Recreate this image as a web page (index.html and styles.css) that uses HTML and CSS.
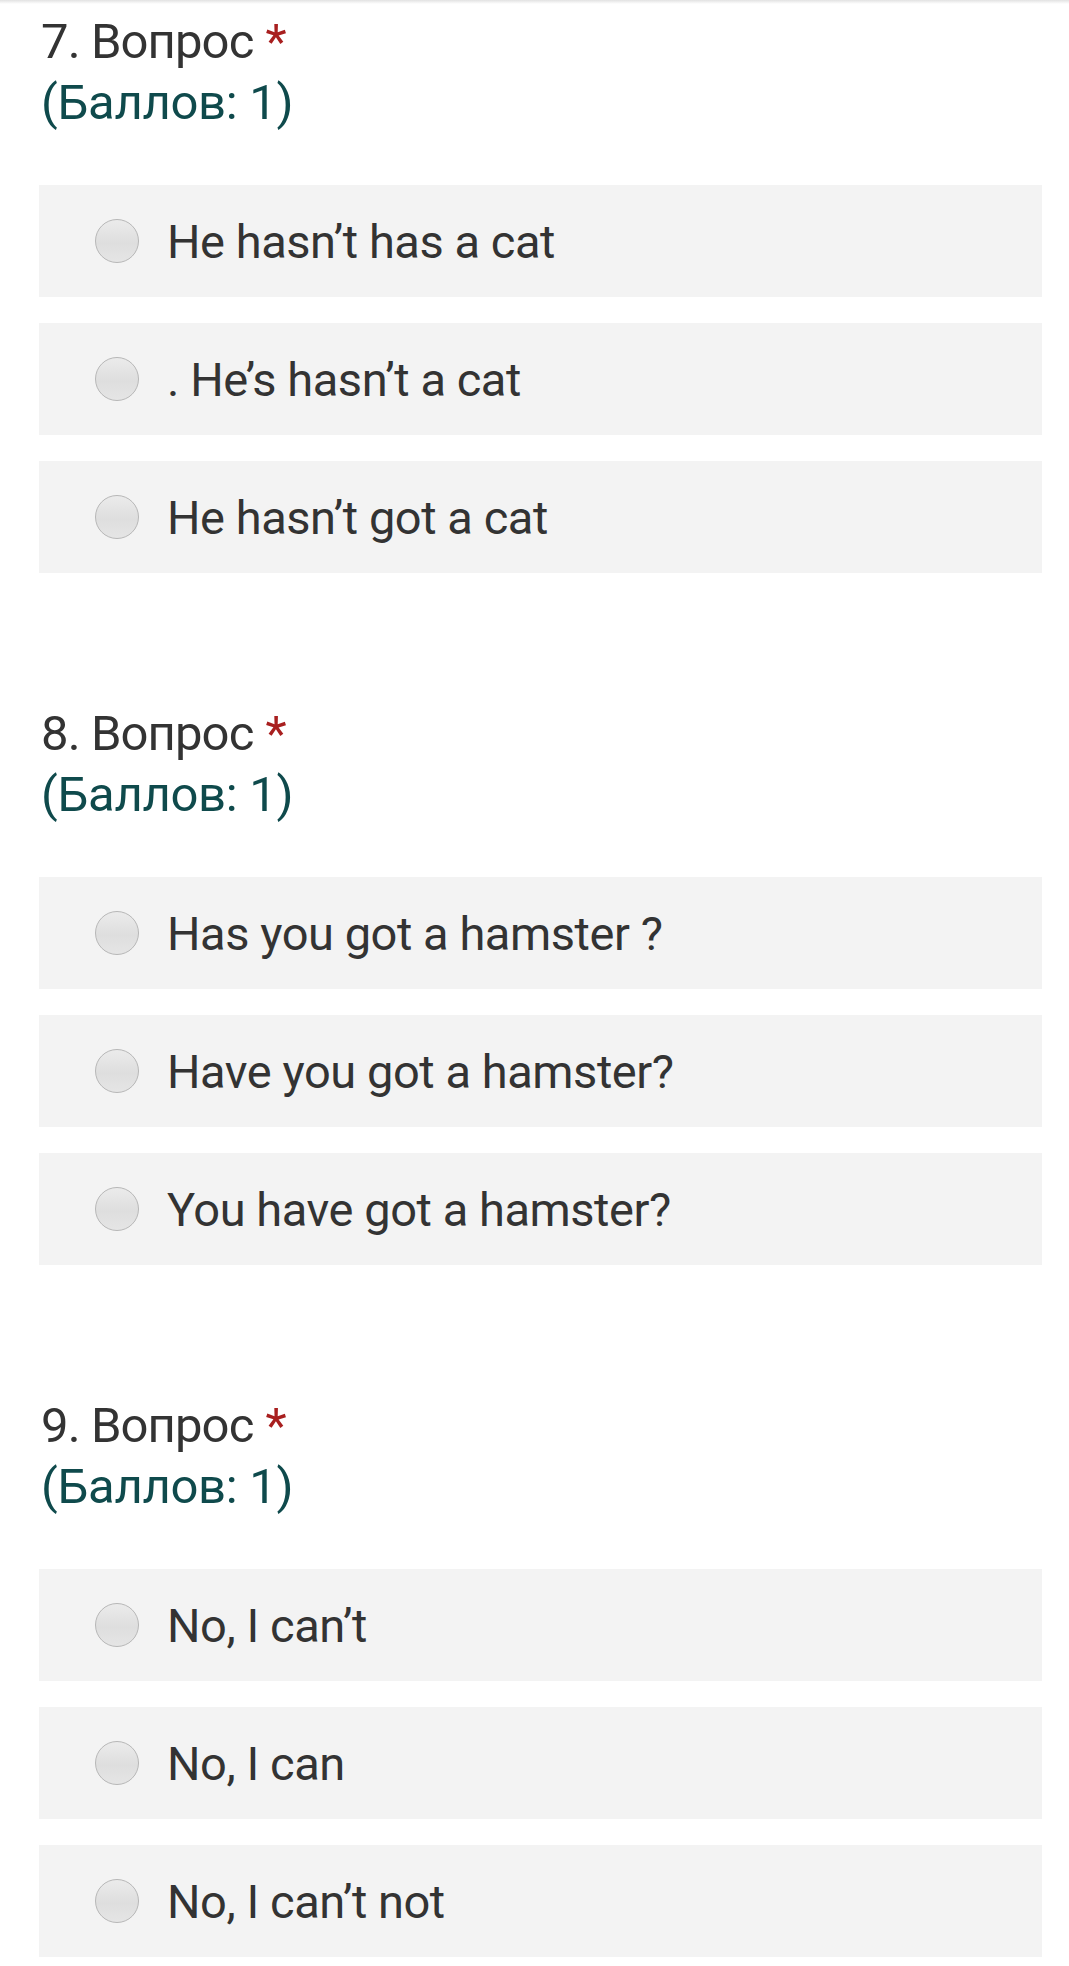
FILE: index.html
```html
<!DOCTYPE html>
<html lang="ru">
<head>
<meta charset="utf-8">
<title>Тест</title>
<link rel="stylesheet" href="styles.css">
</head>
<body>
<div class="topbar"></div>
<main class="form">
  <section class="question">
    <h2 class="q-title"><span class="q-name">7. Вопрос</span> <span class="req">*</span><br><span class="q-points">(Баллов: 1)</span></h2>
    <div class="options">
      <label class="option"><span class="radio"></span><span class="opt-text">He hasn’t has a cat</span></label>
      <label class="option"><span class="radio"></span><span class="opt-text">. He’s hasn’t a cat</span></label>
      <label class="option"><span class="radio"></span><span class="opt-text">He hasn’t got a cat</span></label>
    </div>
  </section>
  <section class="question">
    <h2 class="q-title"><span class="q-name">8. Вопрос</span> <span class="req">*</span><br><span class="q-points">(Баллов: 1)</span></h2>
    <div class="options">
      <label class="option"><span class="radio"></span><span class="opt-text">Has you got a hamster ?</span></label>
      <label class="option"><span class="radio"></span><span class="opt-text">Have you got a hamster?</span></label>
      <label class="option"><span class="radio"></span><span class="opt-text">You have got a hamster?</span></label>
    </div>
  </section>
  <section class="question">
    <h2 class="q-title"><span class="q-name">9. Вопрос</span> <span class="req">*</span><br><span class="q-points">(Баллов: 1)</span></h2>
    <div class="options">
      <label class="option"><span class="radio"></span><span class="opt-text">No, I can’t</span></label>
      <label class="option"><span class="radio"></span><span class="opt-text">No, I can</span></label>
      <label class="option"><span class="radio"></span><span class="opt-text">No, I can’t not</span></label>
    </div>
  </section>
</main>
</body>
</html>
```
FILE: styles.css
```css
html, body {
  margin: 0;
  padding: 0;
  background: #ffffff;
}
body {
  font-family: Roboto, "Noto Sans", "Liberation Sans", sans-serif;
  color: #333333;
}
.topbar {
  height: 4px;
  background: linear-gradient(#e2e2e2, #f4f4f4 60%, #ffffff);
}
.form {
  padding: 7px 27px 0 39px;
}
.question + .question {
  margin-top: 130px;
}
.q-title {
  margin: 0 0 52px 2px;
  font-size: 49px;
  font-weight: 400;
  line-height: 61px;
  color: #333333;
}
.q-name {
  letter-spacing: -0.9px;
}
.req {
  color: #a81f1f;
}
.q-points {
  color: #0f4a4c;
  letter-spacing: -0.3px;
}
.options {
  display: flex;
  flex-direction: column;
  gap: 26px;
}
.option {
  display: flex;
  align-items: center;
  height: 112px;
  background: #f3f3f3;
  padding-left: 56px;
}
.radio {
  flex: none;
  box-sizing: border-box;
  width: 44px;
  height: 44px;
  border-radius: 50%;
  border: 1.5px solid #b7b7b7;
  background: linear-gradient(#ebebeb, #dedede 55%, #e5e5e5);
  margin-right: 28px;
}
.opt-text {
  font-size: 47px;
  line-height: 57px;
  letter-spacing: -0.45px;
  color: #333333;
}
```
